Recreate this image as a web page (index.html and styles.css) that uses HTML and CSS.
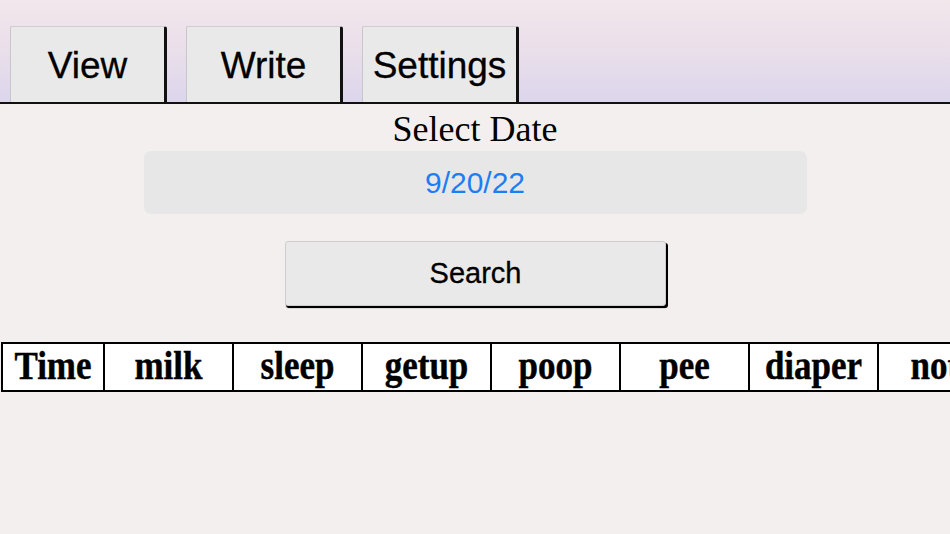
FILE: index.html
```html
<!DOCTYPE html>
<html>
<head>
<meta charset="utf-8">
<link rel="stylesheet" href="styles.css">
</head>
<body>
<header class="topbar">
  <div class="tab">View</div>
  <div class="tab">Write</div>
  <div class="tab">Settings</div>
</header>
<main class="content">
  <div class="label">Select Date</div>
  <div class="datefield">9/20/22</div>
  <div class="search">Search</div>
  <div class="gridwrap">
    <table class="grid">
      <colgroup>
        <col class="w-time">
        <col class="w-col"><col class="w-col"><col class="w-col"><col class="w-col">
        <col class="w-col"><col class="w-col"><col class="w-col">
      </colgroup>
      <tr>
        <th><span>Time</span></th>
        <th><span>milk</span></th>
        <th><span>sleep</span></th>
        <th><span>getup</span></th>
        <th><span>poop</span></th>
        <th><span>pee</span></th>
        <th><span>diaper</span></th>
        <th><span>note</span></th>
      </tr>
    </table>
  </div>
</main>
</body>
</html>
```
FILE: styles.css
```css
html, body {
  margin: 0;
  padding: 0;
}
body {
  width: 950px;
  height: 534px;
  overflow: hidden;
  background: #f3efee;
  font-family: "Liberation Sans", Arial, sans-serif;
}
.topbar {
  box-sizing: border-box;
  display: flex;
  align-items: flex-end;
  gap: 19px;
  padding-left: 10px;
  background: linear-gradient(to bottom, #f2e7eb 0%, #ebe0ea 45%, #dcd6ec 100%);
  border-bottom: 2px solid #111;
  height: 104px;
}
.tab {
  width: 157px;
  height: 76px;
  box-sizing: border-box;
  background: #e9e9e9;
  border-left: 1px solid #c9c6cc;
  border-top: 1px solid #d0cdd2;
  border-right: 3px solid #111;
  border-radius: 0 3px 0 0;
  display: flex;
  align-items: center;
  justify-content: center;
  font-size: 37px;
  color: #000;
  padding-top: 2px;
  -webkit-text-stroke: 0.3px #000;
}
.content {
  display: flex;
  flex-direction: column;
  align-items: center;
}
.label {
  font-family: "Liberation Serif", "Times New Roman", serif;
  font-size: 36px;
  line-height: 44px;
  margin-top: 3px;
  color: #000;
}
.datefield {
  width: 663px;
  height: 63px;
  background: #e8e7e7;
  border-radius: 7px;
  display: flex;
  align-items: center;
  justify-content: center;
  color: #1d7ef4;
  font-size: 30px;
}
.search {
  margin-top: 27px;
  width: 381px;
  height: 65px;
  box-sizing: border-box;
  background: #e9e9e9;
  border: 1px solid #cfcccc;
  border-radius: 3px;
  box-shadow: 2px 2px 0 #000, 1px 2px 1px #000;
  display: flex;
  align-items: center;
  justify-content: center;
  font-size: 29px;
  color: #000;
  margin-left: 1px;
  -webkit-text-stroke: 0.3px #000;
}
.gridwrap {
  align-self: stretch;
  margin-top: 36px;
  padding-left: 1px;
}
.grid {
  width: 1005px;
  border-collapse: collapse;
  background: #fff;
  table-layout: fixed;
}
.w-time { width: 102px; }
.w-col { width: 129px; }
.grid th {
  border: 2px solid #000;
  height: 46px;
  padding: 0;
  font-family: "Liberation Serif", "Times New Roman", serif;
  font-weight: bold;
  font-size: 35px;
  text-align: center;
  vertical-align: middle;
  white-space: nowrap;
  overflow: hidden;
  -webkit-text-stroke: 0.4px #000;
}
.grid th span {
  display: inline-block;
  transform: scaleY(1.13);
  padding-top: 0;
}
```
